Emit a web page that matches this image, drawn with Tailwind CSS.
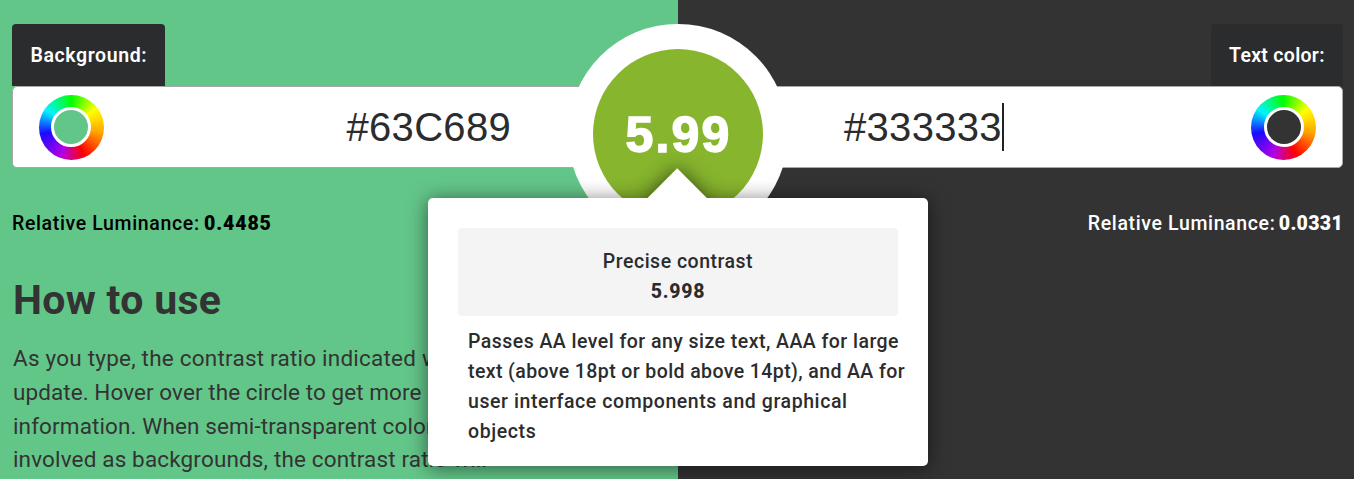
<!DOCTYPE html>
<html lang="en"><head><meta charset="utf-8"><title>Contrast Ratio</title>
<script src="https://cdn.jsdelivr.net/npm/@tailwindcss/browser@4"></script></head>
<body class="h-[479px] overflow-hidden bg-[linear-gradient(90deg,#63c689_678px,#333_678px)] font-['Roboto',sans-serif] text-[#333]">
<main class="relative h-[479px] overflow-hidden whitespace-nowrap pt-6 pr-[11px] pl-3">

<!-- Field labels -->
<div class="flex justify-between text-[19.5px] leading-[64px] font-medium text-white">
  <label class="h-[62px] w-[153px] rounded-t-[4px] bg-[#2b2c2d] pl-[18.5px] font-semibold tracking-[0.6px]">Background:</label>
  <label class="h-[62px] w-[132px] rounded-t-[4px] bg-[#2b2c2d] pl-[18px] font-semibold tracking-[0.3px]">Text color:</label>
</div>

<!-- Colour fields -->
<div class="flex h-[82px] items-center justify-between rounded-[5px] border border-[#a8a8a8] bg-white text-[40px] leading-[80px] text-[#2b2c2d] font-['Liberation_Sans',sans-serif]">
  <div class="flex w-[498px] items-center justify-between pl-[26px]">
    <span class="size-[65px] rounded-full bg-[conic-gradient(#0f0_0deg,#ff0_52deg,#ffa500_100deg,#f00_155deg,#b400e6_200deg,#1a0aff_258deg,#00f5ff_305deg,#0f0_360deg)] pt-3 pl-3">
      <span class="block size-10 rounded-full border-[3px] border-white bg-[#63c689]"></span>
    </span>
    <span class="tracking-[0.3px]">#63C689</span>
  </div>
  <div class="flex w-[498px] items-center justify-between pr-[26px]">
    <span class="flex items-center"><span class="tracking-[0.3px]">#333333</span><span class="h-12 w-[2px] bg-[#222]"></span></span>
    <span class="size-[65px] rounded-full bg-[conic-gradient(#0f0_0deg,#ff0_52deg,#ffa500_100deg,#f00_155deg,#b400e6_200deg,#1a0aff_258deg,#00f5ff_305deg,#0f0_360deg)] pt-3 pl-[13px]">
      <span class="block size-10 rounded-full border-[3px] border-white bg-[#333]"></span>
    </span>
  </div>
</div>

<!-- Luminance values -->
<div class="mt-[41px] flex h-[30px] justify-between text-[19.5px] leading-[30px] font-medium">
  <p class="text-black"><span class="inline-block w-[192px] tracking-[0.64px]">Relative Luminance:</span><b class="font-black tracking-[0.9px]">0.4485</b></p>
  <p class="text-white"><span class="inline-block w-[191px] tracking-[0.64px]">Relative Luminance:</span><b class="font-black tracking-[0.3px]">0.0331</b></p>
</div>

<h1 class="mt-[36px] h-[50px] pl-px text-[41px] leading-[50px] font-bold tracking-[0.3px]">How to use</h1>
<div class="mt-[17px] pl-px text-[22.5px] leading-[33.75px]">
  <p class="tracking-[0.22px]">As you type, the contrast ratio indicated will</p>
  <p class="tracking-[0.07px]">update. Hover over the circle to get more</p>
  <p class="tracking-[0.12px]">information. When semi-transparent colors are</p>
  <p class="tracking-[0.15px]">involved as backgrounds, the contrast ratio will</p>
</div>

<!-- Contrast result, over the fields -->
<div class="absolute top-6 left-[568px] flex size-[220px] items-center justify-center rounded-full bg-white">
  <div class="flex size-[170px] items-center justify-center rounded-full bg-[#87b52e] pt-[2px] pl-px text-[50px] font-bold tracking-[2.2px] text-white font-['Liberation_Sans',sans-serif] [-webkit-text-stroke:1.5px_white]"><span>5.99</span></div>
</div>

<!-- Result tooltip -->
<div class="absolute top-[198px] left-[428px] h-[268px] w-[500px] rounded-[5px] bg-white p-[30px] text-[19.5px] leading-[30px] font-medium text-[#2b2c2d] shadow-[0_2px_20px_rgba(0,0,0,0.55)]">
  <div class="absolute -top-[60px] left-[189px] h-[60px] w-[120px] overflow-hidden">
    <div class="absolute top-[38.8px] left-[38.8px] size-[42.4px] rotate-45 bg-white shadow-[0_0_20px_rgba(0,0,0,0.6)]"></div>
  </div>
  <div class="relative h-[88px] rounded-[4px] bg-[#f4f4f4] pt-[19px] text-center">
    <p class="tracking-[0.5px]">Precise contrast</p>
    <p class="font-extrabold tracking-[0.7px]">5.998</p>
  </div>
  <div class="mt-[11px] pl-[10px]">
    <p class="tracking-[0.46px]">Passes AA level for any size text, AAA for large</p>
    <p class="tracking-[0.4px]">text (above 18pt or bold above 14pt), and AA for</p>
    <p class="tracking-[0.57px]">user interface components and graphical</p>
    <p class="tracking-[0.6px]">objects</p>
  </div>
</div>
</main>
</body></html>
